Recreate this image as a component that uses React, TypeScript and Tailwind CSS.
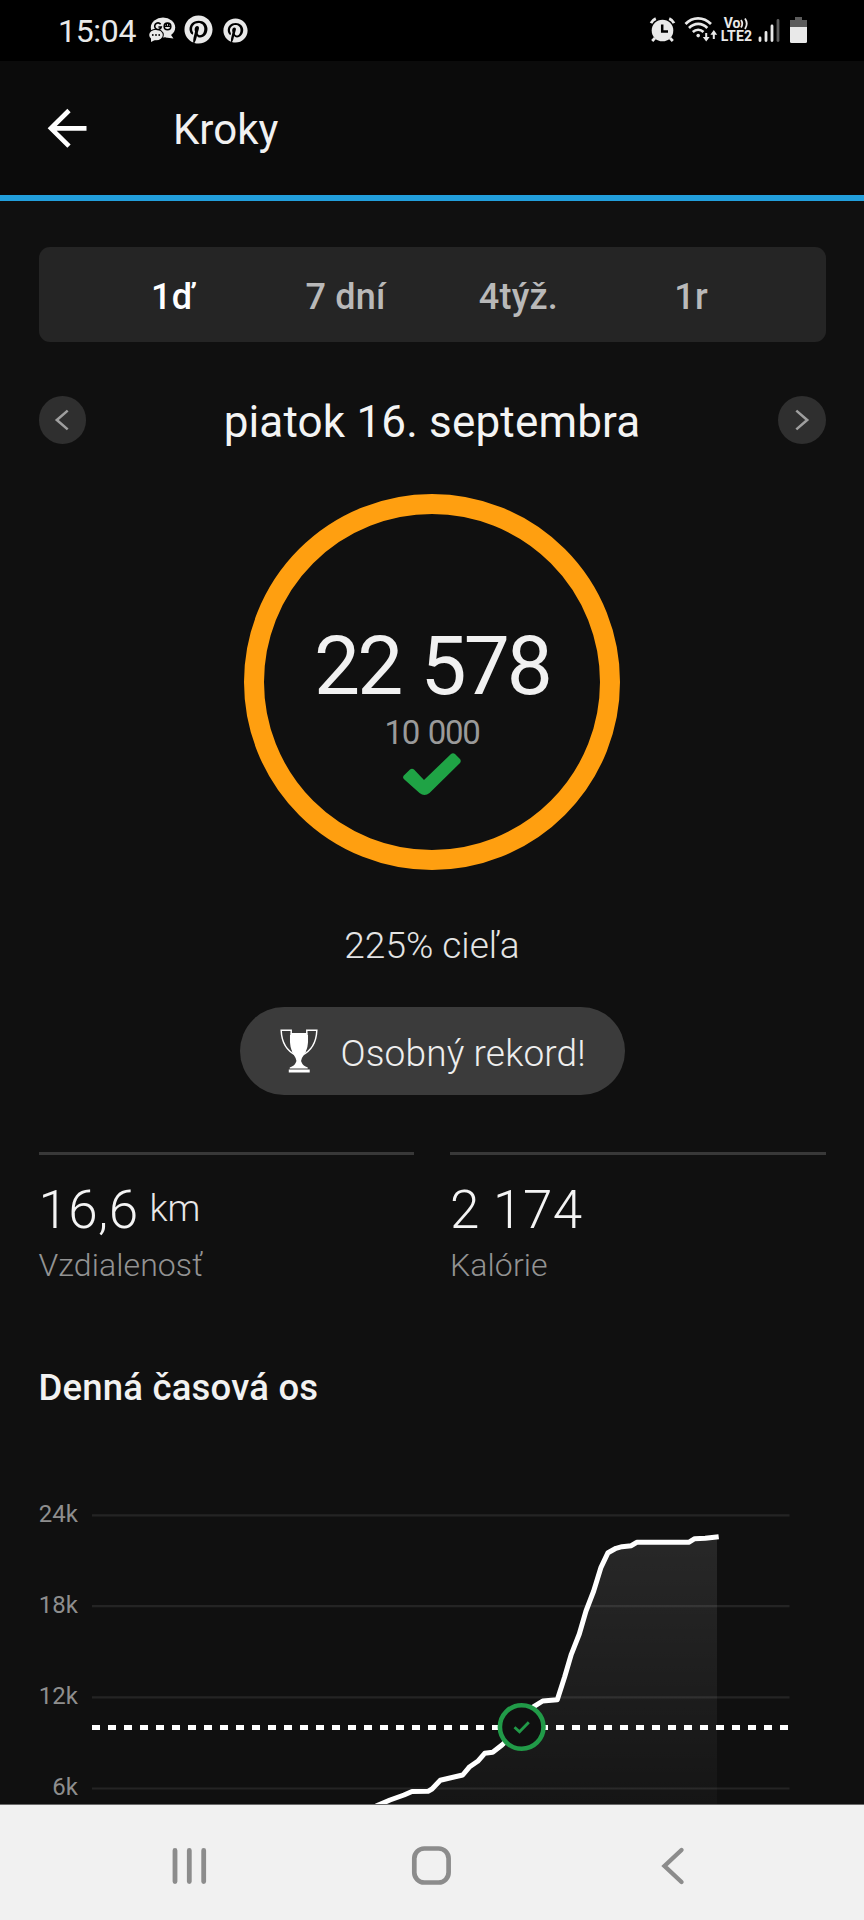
import type { ReactNode } from "react";
import { FaPinterest } from "react-icons/fa";

function StatusBar() {
  return (
    <div className="flex h-[61px] items-start bg-black pl-[58px] text-[#e9e9e9]">
      <span className="mt-[15px] w-[91px] text-[32px] leading-[32px] tracking-[-0.3px]">15:04</span>
      <svg className="mt-[17px]" width="27" height="26" viewBox="0 0 27 26" fill="currentColor">
        <ellipse cx="14" cy="10.5" rx="12.200" ry="10" />
        <path d="M20 15l4.500 6.500-8-1z" />
        <ellipse cx="7" cy="18" rx="7.8" ry="6.3" fill="#000" />
        <ellipse cx="7" cy="18" rx="6.8" ry="5.3" />
        <path d="M2 20l0 5 5-2.500z" />
        <circle cx="3.8" cy="18" r="0.9" fill="#000" />
        <circle cx="7" cy="18" r="0.9" fill="#000" />
        <circle cx="10.2" cy="18" r="0.9" fill="#000" />
        <path d="M11.600 7.200a3.300 3.300 0 1 0 .6 2.800h-2.800" fill="none" stroke="#000" strokeWidth="1.600" />
        <circle cx="18.500" cy="9.400" r="3.300" fill="none" stroke="#000" strokeWidth="1.600" />
        <path d="M15.200 9.400h6.600M17.400 6.500v2.500M19.600 6.500v2.500" stroke="#000" strokeWidth="1.300" />
      </svg>
      <FaPinterest className="mt-[15px] ml-[8px] size-[29px]" />
      <FaPinterest className="mt-[17.5px] ml-[10px] size-[25px]" />
      <div className="ml-auto flex pr-[57px]">
        <svg className="mt-[17px]" width="27" height="26" viewBox="0 0 27 26" fill="none" stroke="currentColor">
          <circle cx="13.500" cy="13.500" r="10.800" fill="currentColor" stroke="none" />
          <path d="M2 6.200C3 4 4.500 2.600 6.800 1.600M25 6.200C24 4 22.500 2.600 20.200 1.600" strokeWidth="2.800" />
          <path d="M6 21l-2.800 3M21 21l2.800 3" strokeWidth="2.800" />
          <path d="M13.200 7.500v7h5.800" stroke="#000" strokeWidth="2.500" />
        </svg>
        <svg className="mt-[16px] ml-[8px]" width="34" height="28" viewBox="0 0 34 28" fill="none" stroke="currentColor">
          <path d="M1.500 8C8.500 0.500 19.500 0.500 27 8" strokeWidth="2.700" />
          <path d="M5 12C10.500 6.500 18 6.500 23.300 12" strokeWidth="2.600" />
          <path d="M8.800 16C12 13 16.500 13 19.500 16" strokeWidth="2.600" />
          <circle cx="14.200" cy="19.600" r="1.800" fill="currentColor" stroke="none" />
          <path d="M22.200 17v7M29.800 16v7" strokeWidth="2" />
          <path d="M18.800 21h6.800l-3.400 4.500zM26.400 18.700h6.800L29.800 14z" fill="currentColor" stroke="none" />
        </svg>
        <div className="mt-[17px] ml-[1px] flex w-[35px] flex-col items-center text-[14px] leading-[13px] font-bold">
          <div className="flex">
            <span>Vo</span>
            <svg width="9" height="13" viewBox="0 0 9 13" fill="none" stroke="currentColor" strokeWidth="1.800">
              <path d="M1 3q2.500 3.700 0 7.500M5 1.500q3.500 5 0 10.500" />
            </svg>
          </div>
          <div className="tracking-[0.200px]">LTE2</div>
        </div>
        <svg className="mt-[17px] ml-[4px]" width="22" height="26" viewBox="0 0 22 26" strokeWidth="2.800" strokeLinecap="round" stroke="currentColor">
          <path d="M2 21v2.500M8 15.500v8M14 9v14.500" />
          <path d="M20 3.500v20" stroke="#5c5c5c" />
        </svg>
        <svg className="mt-[17px] ml-[10px]" width="17" height="26" viewBox="0 0 17 26">
          <path d="M5 0h7v3h5v8H0V3h5z" fill="#5c5c5c" />
          <path d="M0 10h17v14.500q0 1.500-1.500 1.500h-14Q0 26 0 24.500z" fill="currentColor" />
        </svg>
      </div>
    </div>
  );
}

function Header() {
  return (
    <header className="flex h-[140px] border-b-[6px] border-[#229fdc] bg-[#0b0b0b] pl-[47px]">
      <svg className="mt-[47px]" width="41" height="41" viewBox="0 0 41 41" fill="none" stroke="#fff" strokeWidth="4.700">
        <path d="M22 2.500L4 20.300 22 38.100M4 20.300h35.500" />
      </svg>
      <h1 className="mt-[48px] ml-[85px] text-[42px] leading-[42px] text-[#f1f1f1]">Kroky</h1>
    </header>
  );
}

const ranges = [
  { label: "1ď", tone: "text-white" },
  { label: "7 dní", tone: "text-[#b9b9b9]" },
  { label: "4týž.", tone: "text-[#b9b9b9]" },
  { label: "1r", tone: "text-[#b9b9b9]" },
];

function RangeTabs() {
  return (
    <nav className="mt-[46px] grid h-[95px] grid-cols-4 items-center rounded-[11px] bg-[#252525] px-[48px] pt-[4px] text-center text-[36px] leading-[36px] font-medium tracking-[0.2px]">
      {ranges.map((r) => (
        <span key={r.label} className={r.tone}>
          {r.label}
        </span>
      ))}
    </nav>
  );
}

function RoundButton({ children }: { children: ReactNode }) {
  return (
    <button className="flex size-[47.500px] items-center justify-center rounded-full bg-[#2f2f2f]">
      <svg width="48" height="48" viewBox="0 0 48 48" fill="none" stroke="#9f9f9f" strokeWidth="2.600">
        {children}
      </svg>
    </button>
  );
}

function DayPicker() {
  return (
    <div className="mt-[54px] flex h-[48px] items-center justify-between">
      <RoundButton>
        <path d="M29 14.500L18 24l11 9.500" />
      </RoundButton>
      <h2 className="pt-[4px] text-[44px] leading-[42px] tracking-[0.170px] text-[#f4f4f4]">piatok 16. septembra</h2>
      <RoundButton>
        <path d="M18.500 14.500L29.500 24l-11 9.500" />
      </RoundButton>
    </div>
  );
}

function StepRing() {
  return (
    <div className="mx-auto mt-[49.500px] flex size-[376px] flex-col items-center rounded-full border-[20px] border-[#ff9f10] pt-[111px]">
      <div className="text-[82px] leading-[82px] tracking-[-3px] text-[#f1f1f1] [word-spacing:3px]">22 578</div>
      <div className="mt-[6px] text-[33px] leading-[40px] tracking-[-1.300px] text-[#9a9a9a] [word-spacing:2px]">10 000</div>
      <svg width="60" height="44" viewBox="0 0 60 44" fill="#1fa345">
        <path d="M1.800 22.500 8 16.500Q10 15 12 16.500L22 27 49 1Q51 -0.600 53 1L58 6Q59.500 8 58 10L27.500 40Q22.500 44 17.500 40L1.800 26Q0.300 24.300 1.800 22.500z" />
      </svg>
    </div>
  );
}

function RecordBadge() {
  return (
    <div className="mx-auto mt-[39px] flex h-[88px] w-[385px] rounded-full bg-[#3b3b3b] pl-[40px]">
      <svg className="mt-[22px]" width="38" height="45" viewBox="0 0 39 45" preserveAspectRatio="none" fill="#fff">
        <path d="M11 4h17v9q0 9-5.500 16-1.500 2.500 0 5 1 2.500 6 4.500v1H10v-1q5-2 6-4.500 1.500-2.500 0-5Q11 22 11 13z" />
        <path d="M9 40.500h21.500V43.500H9z" />
        <path d="M11.500 6V1.200H1.200Q2 20 17 26.500M27.500 6V1.200H37.800Q37 20 22 26.500M11 6v7q0 5 2.500 10M28 6v7q0 5-2.500 10" fill="none" stroke="#fff" strokeWidth="1.500" />
      </svg>
      <span className="mt-[28px] ml-[23px] text-[37px] leading-[37px] font-light tracking-[0.150px] text-[#eee]">Osobný rekord!</span>
    </div>
  );
}

function Stat({ value, unit, label }: { value: string; unit?: string; label: string }) {
  return (
    <div className="flex-1 border-t-[3px] border-[#383838] pt-[28px] font-light">
      <div className="flex h-[54px]">
        <span className="text-[53px] leading-[54px] tracking-[0.400px] text-[#f4f4f4]">{value}</span>
        {unit && <span className="ml-[11px] text-[37px] leading-[52px] text-[#e8e8e8]">{unit}</span>}
      </div>
      <div className="mt-[8px] text-[32px] leading-[40px] tracking-[0.100px] text-[#939393]">{label}</div>
    </div>
  );
}

const curve =
  "376,1806 390,1800 404,1795 412,1791.5 428,1791.3 432,1789 440.3,1780.3 462.7,1775 469.7,1766.7 477.7,1761.3 484.7,1753.3 492.7,1752.3 502,1745 521,1727 533.7,1706.7 542.7,1701 557.300,1699.700 564.700,1676.700 571.300,1654.300 579.300,1634 586,1611 593.700,1591 601,1567.300 608,1552.700 616,1548.300 622,1546.700 631.300,1545.700 636.700,1542.300 688.700,1542.300 694.700,1538.700 705.300,1538.300 718.700,1536.700";

const gridLines = [
  { y: 1515.3, label: "24k" },
  { y: 1606.2, label: "18k" },
  { y: 1697.3, label: "12k" },
  { y: 1788.5, label: "6k" },
];

function Timeline() {
  return (
    <svg className="mt-auto block shrink-0" width="864" height="304" viewBox="0 1500 864 304">
      <defs>
        <linearGradient id="area" gradientUnits="userSpaceOnUse" x1="0" y1="1537" x2="0" y2="1880">
          <stop offset="0" stopColor="#fff" stopOpacity="0.1" />
          <stop offset="1" stopColor="#fff" stopOpacity="0" />
        </linearGradient>
      </defs>
      {gridLines.map((g) => (
        <g key={g.label}>
          <path d={`M92 ${g.y}H789.500`} stroke="#242424" strokeWidth="2.200" />
          <text x="78" y={g.y + 6.7} textAnchor="end" fontSize="24" fill="#8e8e8e">
            {g.label}
          </text>
        </g>
      ))}
      <polygon points={`${curve} 717,1536.700 717,1810 376,1810`} fill="url(#area)" />
      <path d="M92 1727.500H789" stroke="#fff" strokeWidth="5" strokeDasharray="8 8" />
      <polyline points={curve} fill="none" stroke="#fff" strokeWidth="5" strokeLinejoin="round" />
      <circle cx="521.700" cy="1727" r="21.800" fill="#101010" stroke="#219a48" strokeWidth="4.600" />
      <path d="M514.500 1727.200l5 4.600 9.300-9.600" fill="none" stroke="#219a48" strokeWidth="2.800" />
    </svg>
  );
}

function NavBar() {
  return (
    <div className="h-[116px] shrink-0 border-t border-[#6a6a6a] bg-[#f1f1f1]">
      <div className="mx-auto grid h-full w-[724px] grid-cols-3 items-center justify-items-center pt-[7px]">
        <svg width="44" height="44" viewBox="0 0 44 44" stroke="#8c8c8c" strokeWidth="4.800" strokeLinecap="round">
          <path d="M6 6.500v31M20.300 6.500v31M34.700 6.500v31" />
        </svg>
        <svg width="44" height="44" viewBox="0 0 44 44" fill="none" stroke="#8c8c8c" strokeWidth="4.700">
          <rect x="4.300" y="4.500" width="34.300" height="34" rx="10" />
        </svg>
        <svg width="44" height="44" viewBox="0 0 44 44" fill="none" stroke="#8c8c8c" strokeWidth="4.400" strokeLinecap="round">
          <path d="M30.500 6L13.500 22l17 16" />
        </svg>
      </div>
    </div>
  );
}

export default function App() {
  return (
    <div className="flex h-[1920px] w-[864px] flex-col overflow-hidden bg-[#101010] font-['Roboto',sans-serif]">
      <StatusBar />
      <Header />
      <main className="px-[38.500px]">
        <RangeTabs />
        <DayPicker />
        <StepRing />
        <p className="mt-[54px] text-center text-[37px] leading-[44px] font-light text-[#e4e4e4]">225% cieľa</p>
        <RecordBadge />
        <div className="mt-[57.500px] flex gap-[36px]">
          <Stat value="16,6" unit="km" label="Vzdialenosť" />
          <Stat value="2 174" label="Kalórie" />
        </div>
        <h3 className="mt-[81px] text-[36.500px] leading-[44px] font-medium tracking-[0.200px] text-[#f2f2f2]">Denná časová os</h3>
      </main>
      <Timeline />
      <NavBar />
    </div>
  );
}
